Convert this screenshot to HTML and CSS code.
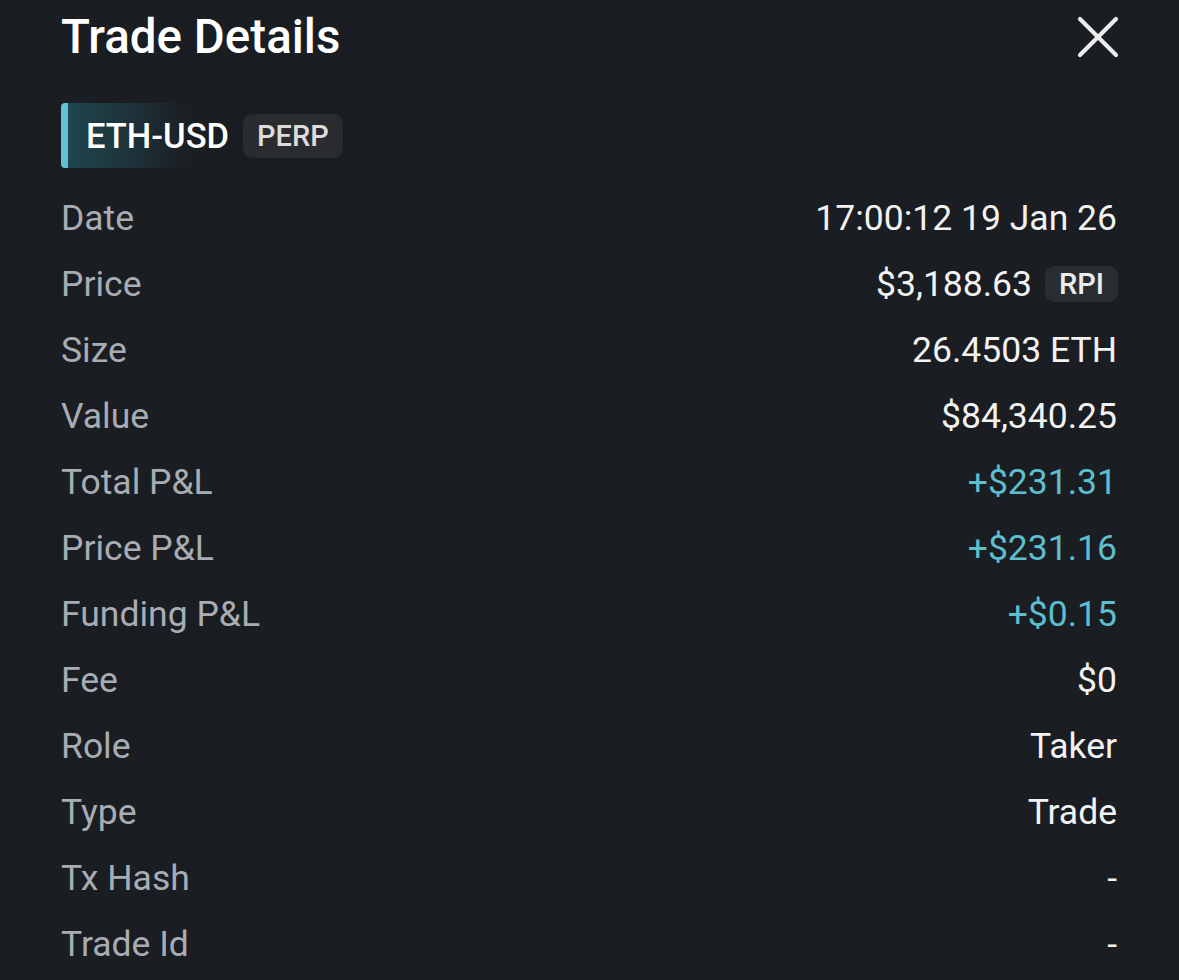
FILE: index.html
```html
<!DOCTYPE html>
<html>
<head>
<meta charset="utf-8">
<link rel="stylesheet" href="styles.css">
</head>
<body>
<div class="sheet">
  <div class="header">
    <h1 class="title">Trade Details</h1>
    <button class="close" aria-label="Close">
      <svg width="44" height="44" viewBox="0 0 44 44"><path d="M4 4 L40 40 M40 4 L4 40" stroke="#ececec" stroke-width="4.2" stroke-linecap="round"/></svg>
    </button>
  </div>
  <div class="market">
    <div class="market-chip"><span class="market-name">ETH-USD</span></div>
    <span class="tag">PERP</span>
  </div>
  <div class="rows">
    <div class="row"><span class="label">Date</span><span class="value">17:00:12 19 Jan 26</span></div>
    <div class="row"><span class="label">Price</span><span class="value">$3,188.63<span class="tag tag-small">RPI</span></span></div>
    <div class="row"><span class="label">Size</span><span class="value">26.4503 ETH</span></div>
    <div class="row"><span class="label">Value</span><span class="value">$84,340.25</span></div>
    <div class="row"><span class="label">Total P&amp;L</span><span class="value pos">+$231.31</span></div>
    <div class="row"><span class="label">Price P&amp;L</span><span class="value pos">+$231.16</span></div>
    <div class="row"><span class="label">Funding P&amp;L</span><span class="value pos">+$0.15</span></div>
    <div class="row"><span class="label">Fee</span><span class="value">$0</span></div>
    <div class="row"><span class="label">Role</span><span class="value">Taker</span></div>
    <div class="row"><span class="label">Type</span><span class="value">Trade</span></div>
    <div class="row"><span class="label">Tx Hash</span><span class="value">-</span></div>
    <div class="row"><span class="label">Trade Id</span><span class="value">-</span></div>
  </div>
</div>
</body>
</html>
```
FILE: styles.css
```css
html, body {
  margin: 0;
  padding: 0;
  background: #1a1d22;
  height: 100%;
}
body {
  font-family: Roboto, "Noto Sans", sans-serif;
  color: #f0f0f0;
}
.sheet {
  padding: 0 62px 0 61px;
}
.header {
  height: 74px;
  display: flex;
  align-items: center;
  justify-content: space-between;
}
.title {
  margin: 0;
  font-size: 47.5px;
  font-weight: 500;
  color: #ffffff;
}
.close {
  background: none;
  border: 0;
  padding: 0;
  margin-right: -3px;
  display: flex;
}
.market {
  margin-top: 29px;
  height: 65px;
  display: flex;
  align-items: center;
  gap: 14px;
}
.market-chip {
  height: 65px;
  display: flex;
  align-items: center;
  padding-left: 18px;
  border-left: 7px solid #5ec3d4;
  border-radius: 4px 0 0 4px;
  background: linear-gradient(90deg, #20454d 0%, #1d3339 50%, #1a1d22 100%);
  background-size: 125px 100%;
  background-repeat: no-repeat;
  box-sizing: border-box;
}
.market-name {
  font-size: 34.5px;
  font-weight: 500;
  color: #ffffff;
}
.tag {
  display: inline-flex;
  align-items: center;
  background: #2a2b2f;
  color: #dcdcdc;
  font-size: 29px;
  font-weight: 500;
  height: 44px;
  padding: 0 14px;
  border-radius: 9px;
}
.tag-small {
  height: 36px;
  font-size: 29px;
  padding: 0 14px;
  margin-left: 13px;
  margin-right: -1px;
  color: #ececec;
  background: #292c31;
}
.rows {
  margin-top: 17px;
}
.row {
  height: 66px;
  display: flex;
  align-items: center;
  justify-content: space-between;
  font-size: 35.5px;
}
.label {
  color: #a8acb3;
}
.value {
  color: #f2f2f2;
  display: inline-flex;
  align-items: center;
}
.pos {
  color: #5dbecd;
}
```
